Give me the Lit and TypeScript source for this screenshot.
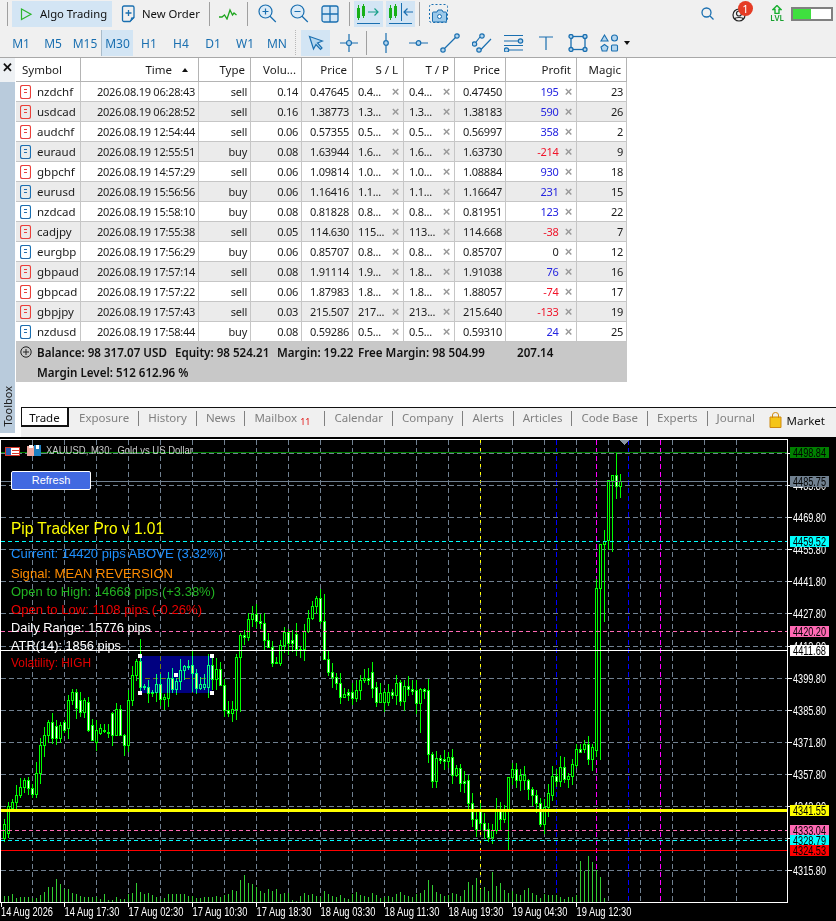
import { LitElement, css, html, svg } from 'lit'
import { customElement } from 'lit/decorators.js'

type Row = [string, string, string, string, string, string, string, string, number, number]

const rows: Row[] = [
	['nzdchf', '06:28:43', 'sell', '0.14', '0.47645', '0.4...', '0.4...', '0.47450', 195, 23],
	['usdcad', '06:28:52', 'sell', '0.16', '1.38773', '1.3...', '1.3...', '1.38183', 590, 26],
	['audchf', '12:54:44', 'sell', '0.06', '0.57355', '0.5...', '0.5...', '0.56997', 358, 2],
	['euraud', '12:55:51', 'buy', '0.08', '1.63944', '1.6...', '1.6...', '1.63730', -214, 9],
	['gbpchf', '14:57:29', 'sell', '0.06', '1.09814', '1.0...', '1.0...', '1.08884', 930, 18],
	['eurusd', '15:56:56', 'buy', '0.06', '1.16416', '1.1...', '1.1...', '1.16647', 231, 15],
	['nzdcad', '15:58:10', 'buy', '0.08', '0.81828', '0.8...', '0.8...', '0.81951', 123, 22],
	['cadjpy', '17:55:38', 'sell', '0.05', '114.630', '115...', '113...', '114.668', -38, 7],
	['eurgbp', '17:56:29', 'buy', '0.06', '0.85707', '0.8...', '0.8...', '0.85707', 0, 12],
	['gbpaud', '17:57:14', 'sell', '0.08', '1.91114', '1.9...', '1.8...', '1.91038', 76, 16],
	['gbpcad', '17:57:22', 'sell', '0.06', '1.87983', '1.8...', '1.8...', '1.88057', -74, 17],
	['gbpjpy', '17:57:43', 'sell', '0.03', '215.507', '217...', '213...', '215.640', -133, 19],
	['nzdusd', '17:58:44', 'buy', '0.08', '0.59286', '0.5...', '0.5...', '0.59310', 24, 25],
]

// open y, close y in page pixels, one candle per 4px starting at x=4
const candles: [number, number][] = [
	[838, 824], [833, 806], [808, 802], [802, 795], [795, 787], [787, 780], [780, 788], [788, 794], [794, 773], [773, 745],
	[745, 735], [735, 722], [722, 738], [726, 738], [738, 725], [722, 730], [728, 700], [700, 692], [692, 708], [700, 712],
	[712, 700], [702, 730], [725, 740], [742, 730], [733, 728], [730, 731], [733, 732], [713, 735], [735, 709], [709, 735],
	[735, 745], [745, 700], [700, 675], [675, 661], [661, 687], [687, 686], [687, 693], [693, 692], [692, 684], [684, 699],
	[699, 697], [698, 678], [678, 689], [689, 681], [681, 670], [670, 666], [666, 666], [665, 673], [673, 688], [688, 684],
	[687, 684], [687, 665], [665, 679], [679, 669], [669, 685], [685, 710], [710, 713], [713, 709], [709, 657], [657, 635],
	[635, 637], [637, 619], [619, 614], [614, 621], [621, 623], [623, 640], [640, 647], [647, 663], [662, 663], [663, 645],
	[645, 632], [632, 643], [640, 643], [634, 649], [649, 649], [649, 631], [631, 618], [618, 606], [606, 598], [598, 621],
	[621, 659], [659, 672], [672, 677], [677, 683], [683, 697], [697, 694], [692, 695], [692, 698], [698, 690], [690, 680],
	[680, 678], [678, 680], [672, 688], [687, 702], [702, 693], [702, 692], [702, 692], [692, 695], [695, 683], [682, 701],
	[701, 686], [686, 689], [689, 691], [690, 703], [703, 689], [689, 691], [690, 754], [754, 781], [781, 758], [758, 760],
	[759, 761], [761, 757], [757, 775], [775, 768], [768, 783], [781, 783], [780, 803], [803, 819], [819, 829], [811, 823],
	[823, 830], [829, 837], [837, 830], [830, 809], [809, 819], [819, 809], [809, 777], [777, 769], [769, 780], [780, 775],
	[780, 775], [780, 789], [789, 795], [795, 803], [803, 824], [824, 807], [807, 793], [795, 776], [776, 781], [781, 767],
	[767, 779], [779, 776], [776, 764], [765, 749], [749, 752], [749, 744], [744, 759], [759, 747], [750, 588], [588, 544],
	[544, 541], [540, 480], [480, 475], [475, 486], [486, 481],
]

const wickOverride: Record<number, [number, number]> = {
	140: [639, 693], 192: [650, 692], 240: [633, 712], 324: [594, 640], 420: [688, 733], 508: [805, 850],
	600: [580, 760], 604: [530, 622], 608: [524, 550], 612: [476, 552], 616: [452, 499], 620: [474, 498], 624: [478, 494],
}

const volumes = [
	6, 6, 8, 4, 5, 5, 5, 4, 4, 7, 10, 15, 15, 23, 18, 13, 13, 9, 8, 6, 5, 5, 5, 5, 3, 8, 2, 2, 5, 3, 3, 8, 9, 19, 10, 8, 9, 7, 5, 3,
	4, 8, 8, 8, 8, 8, 6, 6, 4, 4, 5, 5, 5, 6, 5, 7, 8, 12, 11, 22, 27, 19, 18, 15, 11, 9, 13, 11, 13, 8, 9, 9, 2, 1, 6, 9, 7, 8, 6,
	5, 11, 8, 6, 5, 7, 4, 3, 8, 10, 7, 6, 5, 9, 7, 4, 5, 6, 5, 8, 10, 7, 6, 5, 8, 9, 12, 22, 17, 10, 8, 6, 7, 9, 8, 6, 12, 20, 17,
	24, 13, 15, 11, 30, 16, 19, 12, 9, 11, 8, 7, 12, 14, 9, 7, 4, 8, 7, 7, 7, 5, 3, 5, 5, 7, 41, 31, 46, 40, 32, 25, 4,
]

const priceTicks = [453, 485, 517, 549, 581, 613, 646, 678, 710, 742, 774, 806, 838, 870]

const dates = [
	'14 Aug 2026', '14 Aug 17:30', '17 Aug 02:30', '17 Aug 10:30', '17 Aug 18:30',
	'18 Aug 03:30', '18 Aug 11:30', '18 Aug 19:30', '19 Aug 04:30', '19 Aug 12:30',
]

const levels: [number, string, string, number, string][] = [
	[452, '4498.84', '#008000', 1, 'none'],
	[481, '4485.75', '#708090', 1, 'none'],
	[541, '4459.52', '#00ffff', 1, '4 3'],
	[631, '4420.20', '#ff69b4', 1, '4 3'],
	[650, '4411.68', '#ffffff', 1, 'none'],
	[810, '4341.55', '#ffff00', 2, 'none'],
	[830, '4333.04', '#ff69b4', 1, '4 3'],
	[840, '4328.79', '#00ffff', 1, '4 3'],
	[850, '4324.53', '#ff0000', 1, 'none'],
]

const overlay: [number, string, string, number, number][] = [
	[534, 'Pip Tracker Pro v 1.01', '#ffff00', 16, 153],
	[558, 'Current: 14420 pips ABOVE (3.32%)', '#1e90ff', 13, 212],
	[578, 'Signal: MEAN REVERSION', '#ff8c00', 13, 162],
	[596, 'Open to High: 14668 pips (+3.38%)', '#22b422', 13, 204],
	[614, 'Open to Low: 1108 pips (-0.26%)', '#f00000', 13, 191],
	[632, 'Daily Range: 15776 pips', '#ffffff', 13, 140],
	[650, 'ATR(14): 1856 pips', '#ffffff', 13, 110],
	[667, 'Volatility: HIGH', '#e00000', 13, 80],
]

const tabs = ['Exposure', 'History', 'News', 'Mailbox', 'Calendar', 'Company', 'Alerts', 'Articles', 'Code Base', 'Experts', 'Journal']
const timeframes = ['M1', 'M5', 'M15', 'M30', 'H1', 'H4', 'D1', 'W1', 'MN']

const BLUE = '#1a6fb0'

function noise(seed: number) {
	const v = Math.sin(seed * 12.9898) * 43758.5453
	return v - Math.floor(v)
}

function renderChart() {
	const wicks = candles
		.map(([o, c], i) => {
			const x = (i + 1) * 4
			const top = Math.min(o, c)
			const bottom = Math.max(o, c)
			const hi = wickOverride[x]?.[0] ?? Math.round(top - 1 - noise(x) * 10)
			const lo = wickOverride[x]?.[1] ?? Math.round(bottom + 1 + noise(x + 0.5) * 11)
			return `M${x + 0.5} ${hi}V${lo}`
		})
		.join('')

	const vLines = Array.from({ length: 23 }, (_, i) => `M${(i + 1) * 32 + 0.5} 440V902`).join('')
	const hLines = priceTicks.map((y) => `M1 ${y + 0.5}H787`).join('')
	const volumePath = volumes.map((h, i) => `M${(i + 1) * 4 + 0.5} 902v-${h}`).join('')

	return html`<svg class="chart-svg" viewBox="0 437 836 484" width="836" height="484" shape-rendering="crispEdges">
		<path d=${hLines + vLines} class="grid-line"></path>
		<path d="M480.5 440V902" class="dot-line" stroke="#ffff00"></path>
		<path d="M556.5 440V902M628.5 440V902" class="dash-line" stroke="#0000ff"></path>
		<path d="M596.5 440V902M660.5 440V902" class="dash-line" stroke="#ff00ff"></path>
		<path d=${volumePath} class="volume"></path>
		<path d=${wicks} class="wick"></path>
		${candles.map(([o, c], i) => {
			const x = (i + 1) * 4
			const top = Math.min(o, c)
			return svg`<rect x=${x - 0.5} y=${top + 0.5} width="2" height=${Math.max(Math.abs(o - c), 1)} class=${c > o ? 'bear' : 'bull'}></rect>`
		})}
		<rect x="140" y="656" width="72" height="37" class="selection"></rect>
		${[[140, 656], [212, 656], [140, 693], [212, 693], [176, 675]].map(
			([x, y]) => svg`<rect x=${x - 2} y=${y - 2} width="4" height="4" fill="#fff"></rect>`,
		)}
		${levels.map(
			([y, , color, w, dash]) =>
				svg`<line x1="1" x2="787" y1=${y + 0.5} y2=${y + 0.5} stroke=${color} stroke-width=${w === 2 ? 3 : 1} stroke-dasharray=${dash}></line>`,
		)}
		<path d="M619 440h10l-5 5z" fill="#8a96a3"></path>
		<rect x="0.5" y="439.5" width="787" height="463" class="frame"></rect>
		${priceTicks.map(
			(y, i) => svg`<path d="M787 ${y + 0.5}h5" stroke="#fff"></path>
				<text x="793" y=${y + 4.5} class="axis" textLength="33" lengthAdjust="spacingAndGlyphs">${(4497.8 - i * 14).toFixed(2)}</text>`,
		)}
		${levels.map(
			([y, label, color]) => svg`<rect x="790" y=${y - 5} width="39" height="11" fill=${color}></rect>
				<text x="793" y=${y + 4.5} class="axis tag" textLength="33" lengthAdjust="spacingAndGlyphs">${label}</text>`,
		)}
		${dates.map(
			(d, i) => svg`<path d="M${i === 0 ? 1.5 : i * 64 + 0.5} 902v5" stroke="#fff"></path>
				<text x=${i === 0 ? 1 : i * 64 + 0.5} y="916" class="axis" textLength=${i === 0 ? 52 : 55} lengthAdjust="spacingAndGlyphs">${d}</text>`,
		)}
		<rect x="5.5" y="447.5" width="14" height="8" fill="#fff" stroke="#d8392b"></rect>
		<rect x="6" y="448" width="5" height="7" fill="#2a62b8"></rect>
		<path d="M12 450h7M12 453h7" stroke="#d8392b"></path>
		<rect x="27" y="446" width="7" height="10" fill="#f2a9a0"></rect>
		<rect x="29" y="445" width="4" height="3" fill="#fff"></rect>
		<rect x="34" y="445" width="7" height="11" fill="#1e7fc0"></rect>
		<rect x="36" y="445" width="3" height="4" fill="#fff"></rect>
		<text x="46" y="454" class="axis title" textLength="147" lengthAdjust="spacingAndGlyphs">XAUUSD, M30:  Gold vs US Dollar</text>
		${overlay.map(
			([y, label, color, size, w]) =>
				svg`<text x="11" y=${y} fill=${color} font-size=${size} class="note" textLength=${w} lengthAdjust="spacingAndGlyphs">${label}</text>`,
		)}
	</svg>`
}

const candleGlyph = (x: number, top: number, bottom: number, y0: number, y1: number) =>
	svg`<path d="M${x + 1.5} ${y0}V${y1}" stroke="#18b018"></path><rect x=${x + 0.5} y=${top + 0.5} width="2" height=${bottom - top} fill="none" stroke="#18b018"></rect>`

const icons = {
	play: html`<svg width="14" height="14" viewBox="0 0 14 14"><path d="M2.500 2v10.500l9.500-5.200z" fill="none" stroke="#2cb52c" stroke-width="1.200"></path></svg>`,
	order: html`<svg width="16" height="18" viewBox="0 0 16 18" fill="none" stroke=${BLUE} stroke-width="1.300">
		<path d="M3 1h8.500a1.500 1.500 0 0 1 1.500 1.500v9.500l-4 4.500h-6a1.500 1.500 0 0 1-1.500-1.500v-12.500a1.500 1.500 0 0 1 1.500-1.500z"></path>
		<path d="M7.500 5v6M4.500 8h6"></path>
		<path d="M9.500 16.500l.5-4h4z" fill=${BLUE} stroke="none"></path>
	</svg>`,
	pulse: html`<svg width="18" height="12" viewBox="0 0 18 12"><path d="M0 9h3l2.500-2 2.500 4 3-9 2.500 5 1.500-2 2.500 2" fill="none" stroke="#1ea51e" stroke-width="1.300"></path></svg>`,
	zoomIn: html`<svg width="19" height="19" viewBox="0 0 19 19" fill="none" stroke=${BLUE} stroke-width="1.200"><circle cx="7.500" cy="7.500" r="6.500" fill="#dcebf7"></circle><path d="M11.800 12l6 6M7.500 4.500v6M4.500 7.500h6"></path></svg>`,
	zoomOut: html`<svg width="19" height="19" viewBox="0 0 19 19" fill="none" stroke=${BLUE} stroke-width="1.200"><circle cx="7.500" cy="7.500" r="6.500" fill="#dcebf7"></circle><path d="M11.800 12l6 6M4.500 7.500h6"></path></svg>`,
	grid: html`<svg width="18" height="18" viewBox="0 0 18 18" fill="#d3e6f5" stroke=${BLUE} stroke-width="1.300"><rect x="1" y="1" width="16" height="16" rx="2"></rect><path d="M9 1v16M1 9h16"></path></svg>`,
	shiftRight: html`<svg width="24" height="22" viewBox="0 0 24 22" fill="none">
		${candleGlyph(0, 5, 14, 2, 17)}${candleGlyph(5, 3, 12, 1, 15)}
		<path d="M11 9h10M17.500 5.500l3.500 3.500-3.500 3.500" stroke="#18a088" stroke-width="1.200"></path>
		<path d="M0 20.500h23" stroke=${BLUE}></path>
	</svg>`,
	shiftLeft: html`<svg width="24" height="22" viewBox="0 0 24 22" fill="none">
		${candleGlyph(0, 5, 14, 2, 17)}${candleGlyph(5, 3, 12, 1, 15)}
		<path d="M12.500 0v18" stroke=${BLUE}></path>
		<path d="M15 9h9M18.500 5.500l-3.500 3.500 3.500 3.500" stroke=${BLUE} stroke-width="1.200"></path>
		<path d="M0 20.500h23" stroke=${BLUE}></path>
	</svg>`,
	camera: html`<svg width="20" height="20" viewBox="0 0 20 20" fill="none">
		<rect x="0.500" y="0.500" width="18" height="18" rx="2" stroke=${BLUE} stroke-dasharray="2 2"></rect>
		<path d="M6 8h2l1-2h4l1 2h2.500a1 1 0 0 1 1 1v8a1 1 0 0 1-1 1h-12a1 1 0 0 1-1-1v-8a1 1 0 0 1 1-1z" fill="#9cc9ea" stroke=${BLUE}></path>
		<circle cx="10.500" cy="12.500" r="2" fill="#fff" stroke=${BLUE}></circle>
	</svg>`,
	search: html`<svg width="13" height="13" viewBox="0 0 13 13" fill="none" stroke=${BLUE} stroke-width="1.300"><circle cx="5.500" cy="5.500" r="4.500"></circle><path d="M9 9l3.500 3.500"></path></svg>`,
	account: html`<svg width="14" height="14" viewBox="0 0 14 14" fill="none" stroke="#222" stroke-width="1.200"><circle cx="7" cy="7" r="6"></circle><circle cx="7" cy="5.500" r="2.500"></circle><path d="M2.500 11c1-2 8-2 9 0"></path></svg>`,
	lvlArrow: html`<svg width="10" height="9" viewBox="0 0 10 9"><path d="M5 .5l4 4h-2v4h-4v-4h-2z" fill="none" stroke="#19b030" stroke-width="1.400"></path></svg>`,
	cursor: html`<svg width="16" height="16" viewBox="0 0 16 16"><path d="M1.500 1.500l13 4.500-5 2 4.500 5-1.500 1.500-4.500-5-2.500 4.500z" fill="#b5d6ee" stroke=${BLUE} stroke-width="1.200"></path></svg>`,
	cross: html`<svg width="18" height="18" viewBox="0 0 18 18" fill="none" stroke=${BLUE} stroke-width="1.200"><path d="M0 9h6M12 9h6M9 0v6M9 12v6"></path><circle cx="9" cy="9" r="2.500" fill="#b5d6ee"></circle></svg>`,
	vline: html`<svg width="6" height="20" viewBox="0 0 6 20" fill="none" stroke=${BLUE} stroke-width="1.200"><path d="M3 0v7M3 13v7"></path><circle cx="3" cy="10" r="2.300" fill="#b5d6ee"></circle></svg>`,
	hline: html`<svg width="19" height="6" viewBox="0 0 19 6" fill="none" stroke=${BLUE} stroke-width="1.200"><path d="M0 3h7M12 3h7"></path><circle cx="9.500" cy="3" r="2.300" fill="#b5d6ee"></circle></svg>`,
	trend: html`<svg width="20" height="20" viewBox="0 0 20 20" fill="none" stroke=${BLUE} stroke-width="1.200"><path d="M4 16L16 4"></path><circle cx="3" cy="17" r="2.200" fill="#b5d6ee"></circle><circle cx="17" cy="3" r="2.200" fill="#b5d6ee"></circle></svg>`,
	channel: html`<svg width="20" height="20" viewBox="0 0 20 20" fill="none" stroke=${BLUE} stroke-width="1.200"><path d="M2.500 11L8 4M8 17.500L19 6"></path><circle cx="2.500" cy="11" r="2.200" fill="#b5d6ee"></circle><circle cx="10" cy="3" r="2.200" fill="#b5d6ee"></circle><circle cx="7" cy="17" r="2.200" fill="#b5d6ee"></circle></svg>`,
	fibo: html`<svg width="20" height="18" viewBox="0 0 20 18" fill="none" stroke=${BLUE} stroke-width="1.200"><path d="M0 1.500h19M0 7h14M0 11.500h19M5 16h14"></path><circle cx="16.500" cy="7" r="2.200" fill="#b5d6ee"></circle><circle cx="2.500" cy="16" r="2.200" fill="#b5d6ee"></circle></svg>`,
	text: html`<svg width="14" height="14" viewBox="0 0 14 14" fill="none" stroke=${BLUE} stroke-width="1.200"><path d="M0 1h14M7 1v13"></path></svg>`,
	rectangle: html`<svg width="20" height="18" viewBox="0 0 20 18" fill="none" stroke=${BLUE} stroke-width="1.300"><rect x="3" y="2.500" width="14" height="13"></rect>${[[3, 2.5], [17, 2.5], [3, 15.5], [17, 15.5]].map(([x, y]) => svg`<circle cx=${x} cy=${y} r="2" fill="#b5d6ee"></circle>`)}</svg>`,
	shapes: html`<svg width="19" height="18" viewBox="0 0 19 18" fill="#b5d6ee" stroke=${BLUE} stroke-width="1.100"><path d="M4.500 1l3.500 6h-7z"></path><circle cx="14.500" cy="4" r="3"></circle><path d="M4.500 10.500l3.500 2.500-1.200 4h-4.600l-1.200-4z"></path><rect x="11.500" y="11" width="6" height="6" rx="1"></rect></svg>`,
	bag: html`<svg width="13" height="16" viewBox="0 0 13 16"><path d="M1 5h11v10.500h-11z" fill="#f5c518" stroke="#cf8a10"></path><path d="M3.500 6v-3a3 2.500 0 0 1 6 0v3" fill="none" stroke="#cf8a10"></path></svg>`,
	plus: html`<svg width="12" height="12" viewBox="0 0 12 12" fill="none" stroke="#222"><circle cx="6" cy="6" r="5.200"></circle><path d="M6 3v6M3 6h6"></path></svg>`,
}

const orderIcon = (type: string) => {
	const color = type === 'sell' ? '#e8403a' : '#1a6fb0'
	return html`<svg class="row-icon" width="11" height="14" viewBox="0 0 11 14" fill="none" stroke=${color}>
		<rect x="0.500" y="0.500" width="10" height="13" rx="2" stroke-width="1.100"></rect>
		<path d="M4 4.500h3M4 7.500h3"></path>
	</svg>`
}

@customElement('app-root')
export class AppRoot extends LitElement {
	static styles = css`
		:host {
			display: block;
			width: 836px;
			height: 921px;
			overflow: hidden;
			background: #fff;
			font-family: 'Noto Sans', sans-serif;
			font-size: 11px;
			color: #1b1b1b;
		}

		.bar {
			display: flex;
			align-items: center;
			background: #f0f0f0;
		}

		.bar-top {
			height: 27px;
			padding-bottom: 1px;
		}

		.bar-bottom {
			height: 28px;
			padding-left: 5px;
			padding-top: 1px;
		}

		.sep {
			width: 1px;
			height: 24px;
			background: #a0a0a0;
			flex: none;
			margin: 0 3px 0 4px;
		}

		.sep.first {
			margin: 0 4px 0 7px;
		}

		.sep.tight {
			margin: 0 3px 0 1px;
		}

		.tool {
			display: flex;
			align-items: center;
			justify-content: center;
			height: 26px;
			flex: none;
		}

		.tool.on {
			background: #d3e5f4;
		}

		.algo {
			width: 100px;
			justify-content: flex-start;
			padding-left: 7px;
			gap: 7px;
			box-sizing: border-box;
			font-size: 11.300px;
			color: #111;
			white-space: nowrap;
		}

		.new-order {
			width: 92px;
			margin-left: 1px;
			justify-content: flex-start;
			padding-left: 8px;
			gap: 5px;
			box-sizing: border-box;
			font-size: 11.300px;
			color: #111;
			white-space: nowrap;
		}

		.w32 {
			width: 32px;
		}

		.w30 {
			width: 30px;
		}

		.w29 {
			width: 29px;
		}

		.ml1 {
			margin-left: 1px;
		}

		.ml3 {
			margin-left: 3px;
		}

		.tf {
			width: 32px;
			height: 26px;
			display: flex;
			align-items: center;
			justify-content: center;
			font-size: 12px;
			color: #1a6fb0;
		}

		.tf.on {
			background: #d3e5f4;
			border-left: 1px solid #a9bccb;
			box-sizing: border-box;
		}

		.grip {
			width: 1px;
			height: 26px;
			margin: 0 5px 0 2px;
			background-image: linear-gradient(#b8b8b8 50%, transparent 50%);
			background-size: 1px 2px;
		}

		.cursor-btn {
			width: 29px;
			margin-right: 3px;
		}

		.arrow {
			width: 0;
			height: 0;
			border: 3.500px solid transparent;
			border-top: 4px solid #111;
			border-bottom: 0;
		}

		.grow {
			flex: 1;
		}

		.search {
			width: 13px;
			margin-right: 18px;
		}

		.account {
			position: relative;
			width: 14px;
			margin-right: 24px;
			padding-top: 3px;
		}

		.badge {
			position: absolute;
			left: 6px;
			top: 2px;
			width: 15px;
			height: 15px;
			border-radius: 50%;
			background: #e53c25;
			color: #fff;
			font-size: 11px;
			line-height: 15px;
			text-align: center;
		}

		.lvl {
			flex-direction: column;
			width: 14px;
			margin-right: 7px;
			font-size: 8px;
			line-height: 8px;
			color: #19a030;
			font-weight: 600;
		}

		.meter {
			width: 42px;
			height: 14px;
			border: 2px solid #808080;
			box-sizing: border-box;
			background: #fff;
			margin-right: 3px;
			display: flex;
		}

		.meter-fill {
			width: 18px;
			background: #3fe03f;
		}

		.terminal {
			display: flex;
			height: 380px;
			border-top: 1px solid #a8a8a8;
			box-sizing: border-box;
		}

		.rail {
			width: 15px;
			height: 375px;
			display: flex;
			flex-direction: column;
			background: #b9cbdc;
			flex: none;
		}

		.rail-close {
			height: 24px;
			background: #eef1f4;
			font-size: 13px;
			line-height: 20px;
			text-align: center;
			color: #111;
			font-family: 'Liberation Sans', sans-serif;
			font-weight: 700;
		}

		.rail-title {
			margin-top: auto;
			margin-bottom: 6px;
			writing-mode: vertical-rl;
			transform: rotate(180deg);
			align-self: center;
			font-size: 11px;
			line-height: 14px;
		}

		.pane {
			flex: 1;
			display: flex;
			flex-direction: column;
			padding-left: 1px;
			min-width: 0;
		}

		.table {
			width: 611px;
		}

		.tr {
			display: grid;
			grid-template-columns: 65px 118px 52px 51px 51px 51px 51px 51px 71px 50px;
			height: 20px;
		}

		.tr.head {
			height: 24px;
		}

		.tr.alt {
			background: #ebebeb;
		}

		.td {
			display: flex;
			align-items: center;
			justify-content: flex-end;
			padding-right: 3px;
			border-right: 1px solid #c6c6c6;
			border-bottom: 1px solid #c6c6c6;
			box-sizing: border-box;
			white-space: nowrap;
			overflow: hidden;
			font-size: 11px;
			letter-spacing: -0.25px;
		}

		.head .td {
			border-right-color: #b4b4b4;
			border-bottom-color: #b4b4b4;
			padding-right: 5px;
			font-size: 11.500px;
			letter-spacing: 0;
		}

		.td.symbol {
			justify-content: flex-start;
			padding-left: 4px;
			gap: 6px;
			font-size: 11.500px;
			letter-spacing: 0;
		}

		.row-icon {
			flex: none;
		}

		.head .td.symbol {
			padding-left: 6px;
		}

		.sort {
			width: 0;
			height: 0;
			border: 3.500px solid transparent;
			border-bottom: 4px solid #111;
			border-top: 0;
			margin: 0 5px 0 10px;
		}

		.td.level {
			justify-content: space-between;
			padding: 0 4px 0 5px;
		}

		.td.profit {
			gap: 6px;
			padding-right: 4px;
		}

		.x {
			color: #9a9a9a;
			font-family: 'Liberation Sans', sans-serif;
			font-weight: 700;
			font-size: 13px;
			line-height: 12px;
		}

		.up {
			color: #2424e0;
		}

		.down {
			color: #f0142a;
		}

		.summary {
			height: 40px;
			background: #c8c8c8;
			font-weight: 600;
			color: #111;
			font-size: 11.600px;
		}

		.sum-line {
			display: flex;
			align-items: center;
			height: 20px;
			padding-left: 21px;
			white-space: nowrap;
		}

		.sum-line svg {
			margin: 0 5px 0 -17px;
		}

		.sum-a {
			width: 138px;
		}

		.sum-b {
			width: 102px;
		}

		.sum-c {
			width: 81px;
		}

		.sum-d {
			width: 159px;
		}

		.tabs {
			margin-top: auto;
			height: 29px;
			display: flex;
			align-items: flex-start;
			background: #f0f0f0;
			border-top: 1px solid #111;
			margin-left: 5px;
			font-size: 11.500px;
			color: #808080;
			position: relative;
		}

		.tab-on {
			width: 48px;
			height: 19px;
			box-sizing: border-box;
			background: #fff;
			border: solid #111;
			border-width: 0 2px 2px 1px;
			color: #111;
			text-align: center;
			line-height: 18px;
			margin-right: 10px;
			padding-top: 1px;
		}

		.tab {
			display: flex;
			height: 19px;
			line-height: 18px;
			padding-top: 1px;
			white-space: nowrap;
		}

		.tab-sep {
			width: 1px;
			height: 15px;
			margin: 2px 9px 0;
			background: #808080;
		}

		.mail {
			color: #e01010;
			font-size: 9px;
			margin: 5px 5px 0 3px;
			line-height: 16px;
		}

		.market {
			position: absolute;
			right: 11px;
			top: 4px;
			display: flex;
			align-items: center;
			gap: 5px;
			color: #111;
			font-size: 11.500px;
		}

		.chart {
			height: 484px;
			background: #000;
			position: relative;
		}

		.chart-svg {
			display: block;
		}

		.grid-line {
			stroke: #708090;
			stroke-dasharray: 5 3;
			fill: none;
		}

		.dash-line {
			stroke-dasharray: 5 3;
			fill: none;
		}

		.dot-line {
			stroke-dasharray: 3 5;
			fill: none;
		}

		.volume {
			stroke: #32cd32;
			fill: none;
		}

		.wick {
			stroke: #00ff00;
			fill: none;
		}

		.bull {
			fill: #000;
			stroke: #00ff00;
		}

		.bear {
			fill: #fff;
			stroke: #00ff00;
		}

		.selection {
			fill: #000080;
			mix-blend-mode: difference;
		}

		.frame {
			fill: none;
			stroke: #fff;
		}

		.axis {
			font-family: 'Liberation Sans', sans-serif;
			font-size: 12px;
			fill: #fff;
		}

		.axis.tag {
			fill: #000;
		}

		.axis.title {
			fill: #c8c8c8;
			font-size: 11px;
			white-space: pre;
		}

		.note {
			font-family: 'Liberation Sans', sans-serif;
		}

		.refresh {
			position: absolute;
			left: 11px;
			top: 34px;
			width: 80px;
			height: 19px;
			box-sizing: border-box;
			border: 1px solid #fff;
			border-radius: 2px;
			background: #4169e1;
			color: #fff;
			font-family: 'Liberation Sans', sans-serif;
			font-size: 11px;
			line-height: 17px;
			text-align: center;
		}
	`

	render() {
		return html`
			<div class="bar bar-top">
				<span class="sep first"></span>
				<div class="tool on algo">${icons.play}<span>Algo Trading</span></div>
				<div class="tool new-order">${icons.order}<span>New Order</span></div>
				<span class="sep"></span>
				<div class="tool w30">${icons.pulse}</div>
				<span class="sep"></span>
				<div class="tool w32">${icons.zoomIn}</div>
				<div class="tool w32">${icons.zoomOut}</div>
				<div class="tool w30">${icons.grid}</div>
				<span class="sep"></span>
				<div class="tool on w29 ml1">${icons.shiftRight}</div>
				<div class="tool on w29 ml3">${icons.shiftLeft}</div>
				<span class="sep"></span>
				<div class="tool w32">${icons.camera}</div>
				<div class="grow"></div>
				<div class="tool search">${icons.search}</div>
				<div class="tool account">${icons.account}<span class="badge">1</span></div>
				<div class="tool lvl">${icons.lvlArrow}<span>LVL</span></div>
				<div class="meter"><div class="meter-fill"></div></div>
			</div>
			<div class="bar bar-bottom">
				${timeframes.map((t) => html`<div class="tf ${t === 'M30' ? 'on' : ''}">${t}</div>`)}
				<span class="grip"></span>
				<div class="tool on cursor-btn">${icons.cursor}</div>
				<div class="tool w32">${icons.cross}</div>
				<span class="sep tight"></span>
				<div class="tool w32">${icons.vline}</div>
				<div class="tool w32">${icons.hline}</div>
				<div class="tool w32">${icons.trend}</div>
				<div class="tool w32">${icons.channel}</div>
				<div class="tool w32">${icons.fibo}</div>
				<div class="tool w32">${icons.text}</div>
				<div class="tool w32">${icons.rectangle}</div>
				<div class="tool w30">${icons.shapes}</div>
				<span class="arrow"></span>
			</div>
			<div class="terminal">
				<div class="rail">
					<div class="rail-close">✕</div>
					<div class="rail-title">Toolbox</div>
				</div>
				<div class="pane">
					<div class="table">
						<div class="tr head">
							<div class="td symbol">Symbol</div>
							<div class="td">Time<span class="sort"></span></div>
							<div class="td">Type</div>
							<div class="td">Volu...</div>
							<div class="td">Price</div>
							<div class="td">S / L</div>
							<div class="td">T / P</div>
							<div class="td">Price</div>
							<div class="td">Profit</div>
							<div class="td">Magic</div>
						</div>
						${rows.map(
							(r, i) => html`<div class="tr ${i % 2 ? 'alt' : ''}">
								<div class="td symbol">${orderIcon(r[2])}${r[0]}</div>
								<div class="td">2026.08.19 ${r[1]}</div>
								<div class="td">${r[2]}</div>
								<div class="td">${r[3]}</div>
								<div class="td">${r[4]}</div>
								<div class="td level">${r[5]}<span class="x">×</span></div>
								<div class="td level">${r[6]}<span class="x">×</span></div>
								<div class="td">${r[7]}</div>
								<div class="td profit">
									<span class=${r[8] > 0 ? 'up' : r[8] < 0 ? 'down' : ''}>${r[8]}</span><span class="x">×</span>
								</div>
								<div class="td">${r[9]}</div>
							</div>`,
						)}
						<div class="summary">
							<div class="sum-line">
								${icons.plus}
								<span class="sum-a">Balance: 98 317.07 USD</span>
								<span class="sum-b">Equity: 98 524.21</span>
								<span class="sum-c">Margin: 19.22</span>
								<span class="sum-d">Free Margin: 98 504.99</span>
								<span>207.14</span>
							</div>
							<div class="sum-line">Margin Level: 512 612.96 %</div>
						</div>
					</div>
					<div class="tabs">
						<div class="tab-on">Trade</div>
						${tabs.map(
							(t, i) => html`<div class="tab">
								<span>${t}</span>
								${t === 'Mailbox' ? html`<span class="mail">11</span>` : ''}
								${i < tabs.length - 1 ? html`<span class="tab-sep"></span>` : ''}
							</div>`,
						)}
						<div class="market">${icons.bag}<span>Market</span></div>
					</div>
				</div>
			</div>
			<div class="chart">
				${renderChart()}
				<div class="refresh">Refresh</div>
			</div>
		`
	}
}
